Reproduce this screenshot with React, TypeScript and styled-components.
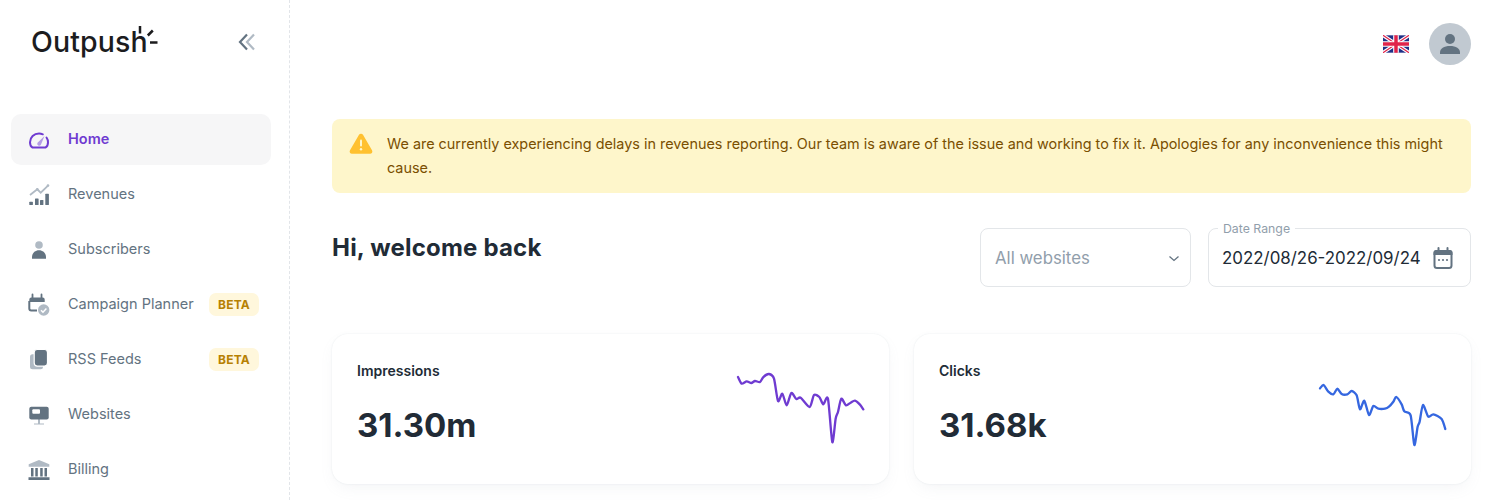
import React from 'react';
import styled, { createGlobalStyle } from 'styled-components';

const GlobalStyle = createGlobalStyle`
  html, body {
    margin: 0;
    padding: 0;
    height: 500px;
    overflow: hidden;
    background: #ffffff;
    font-family: 'Inter', 'Open Sans', sans-serif;
  }
`;

const Page = styled.div`
  display: flex;
  width: 1500px;
  height: 500px;
  overflow: hidden;
`;

const Sidebar = styled.aside`
  flex: 0 0 290px;
  box-sizing: border-box;
  border-right: 1px dashed #e2e5e9;
  padding-left: 11px;
`;

const SidebarHead = styled.div`
  display: flex;
  align-items: center;
  justify-content: space-between;
  height: 84px;
  margin-bottom: 30px;
  padding: 0 33px 0 20px;
`;

const Logo = styled.div`
  display: flex;
  align-items: flex-start;
  height: 40px;
`;

const LogoText = styled.span`
  font-family: 'Inter', sans-serif;
  font-size: 28.500px;
  line-height: 36px;
  font-weight: 500;
  letter-spacing: 0.100px;
  margin-top: 2px;
  color: #1c1c1e;
`;

const LogoSpark = styled.svg`
  margin: 4px 0 0 -10px;
`;

const Nav = styled.nav`
  display: flex;
  flex-direction: column;
  gap: 4px;
  width: 260px;
`;

const NavItem = styled.a<{ $active?: boolean }>`
  display: flex;
  align-items: center;
  height: 51px;
  padding: 0 12px 0 16px;
  border-radius: 10px;
  font-size: 14.500px;
  white-space: nowrap;
  font-weight: ${p => (p.$active ? 600 : 400)};
  color: ${p => (p.$active ? '#6f3bd1' : '#637381')};
  background: ${p => (p.$active ? '#f6f6f7' : 'transparent')};
  svg {
    flex: 0 0 24px;
    margin-right: 17px;
  }
`;

const NavLabel = styled.span`
  margin-bottom: 2px;
`;

const Badge = styled.span`
  margin-left: auto;
  display: flex;
  align-items: center;
  justify-content: center;
  width: 50px;
  height: 23px;
  border-radius: 7px;
  background: #fff7dc;
  color: #b78103;
  font-size: 12px;
  font-weight: 700;
  letter-spacing: 0.200px;
`;

const Main = styled.main`
  flex: 1;
  box-sizing: border-box;
  padding: 23px 29px 0 42px;
`;

const TopBar = styled.header`
  display: flex;
  justify-content: flex-end;
  align-items: center;
  gap: 20px;
`;

const Avatar = styled.div`
  display: flex;
  align-items: center;
  justify-content: center;
  width: 42px;
  height: 42px;
  border-radius: 50%;
  background: #c1c9d1;
`;

const Alert = styled.div`
  display: flex;
  gap: 14px;
  margin-top: 54px;
  padding: 13px 16px 13px 17px;
  border-radius: 8px;
  background: #fef6cb;
  color: #7a4f01;
  font-size: 14.400px;
  line-height: 24px;
  svg {
    flex: 0 0 24px;
  }
`;

const WelcomeRow = styled.section`
  display: flex;
  align-items: flex-start;
  margin-top: 35px;
  gap: 17px;
`;

const Heading = styled.h1`
  flex: 1;
  margin: 2px 0 0;
  font-size: 24px;
  line-height: 36px;
  font-weight: 700;
  letter-spacing: 0.200px;
  color: #212b36;
`;

const Field = styled.div<{ $width: number }>`
  position: relative;
  display: flex;
  align-items: center;
  justify-content: space-between;
  box-sizing: border-box;
  width: ${p => p.$width}px;
  height: 59px;
  border: 1px solid #e3e6e9;
  border-radius: 8px;
`;

const SelectField = styled(Field)`
  padding: 0 9px 0 14px;
  color: #919eab;
  font-size: 16.800px;
`;

const DateField = styled(Field)`
  padding: 0 15px 0 13px;
  color: #212b36;
  font-size: 16.900px;
`;

const FieldLabel = styled.label`
  position: absolute;
  top: -8px;
  left: 9px;
  padding: 0 5px;
  background: #ffffff;
  color: #919eab;
  font-size: 12.300px;
  line-height: 16px;
`;

const Cards = styled.section`
  display: grid;
  grid-template-columns: 1fr 1fr;
  gap: 25px;
  margin-top: 47px;
`;

const Card = styled.article`
  display: flex;
  justify-content: space-between;
  align-items: flex-start;
  box-sizing: border-box;
  height: 150px;
  padding: 0 26px 0 25px;
  border-radius: 16px;
  background: #ffffff;
  box-shadow: 0 0 2px rgba(145, 158, 171, 0.2), 0 6px 16px -4px rgba(145, 158, 171, 0.12);
`;

const CardLabel = styled.div`
  margin-top: 27px;
  font-size: 14px;
  line-height: 20px;
  font-weight: 600;
  color: #212b36;
`;

const CardValue = styled.div`
  margin-top: 20px;
  font-size: 33px;
  line-height: 48px;
  font-weight: 700;
  color: #212b36;
`;

const Spark = styled.svg<{ $top: number }>`
  margin-top: ${p => p.$top}px;
  overflow: visible;
`;

const GREY = '#637381';
const LIGHT = '#b0bac4';

const HomeIcon = () => (
  <svg width="24" height="24" viewBox="0 0 24 24" fill="none">
    <path d="M5.500 19.500C3.500 18.600 3 16.300 3 14.300 3 9.300 7 5.500 12 5.500c1.400 0 2.700.3 3.800.8M19.500 9.500c1 1.400 1.500 3 1.500 4.800 0 2-.5 4.300-2.500 5.200H5.500" stroke="#6f3bd1" strokeWidth="2" strokeLinecap="round" />
    <path d="M10.500 14.800 17.500 8l-3.600 8.700a1.900 1.900 0 1 1-3.400-1.900Z" fill="#b49be6" />
  </svg>
);

const RevenueIcon = () => (
  <svg width="24" height="24" viewBox="0 0 24 24" fill="none">
    <path d="M3 12l7.300-5.700 3.400 3.400 7.600-7.400" stroke={LIGHT} strokeWidth="1.800" />
    <circle cx="10.300" cy="6.300" r="1.300" fill={LIGHT} />
    <circle cx="21" cy="2.500" r="1.300" fill={LIGHT} />
    <rect x="2.300" y="18.700" width="3.600" height="3.300" rx="0.600" fill={GREY} />
    <rect x="8" y="15.500" width="3.600" height="6.500" rx="0.600" fill={GREY} />
    <rect x="13" y="17" width="3.400" height="5" rx="0.600" fill={GREY} />
    <rect x="18.300" y="10.700" width="3.600" height="11.300" rx="0.600" fill={GREY} />
  </svg>
);

const SubscribersIcon = () => (
  <svg width="24" height="24" viewBox="0 0 24 24">
    <circle cx="12" cy="7" r="3.800" fill={LIGHT} />
    <path d="M5 20.700v-1.500c0-4 3-6.900 7-6.900s7 2.900 7 6.900v1.500H5Z" fill={GREY} />
  </svg>
);

const PlannerIcon = () => (
  <svg width="24" height="24" viewBox="0 0 24 24" fill="none">
    <path d="M2.300 6.500a2 2 0 0 1 2-2h11.400a2 2 0 0 1 2 2V9H2.300V6.500Z" fill={GREY} />
    <path d="M5.500 1.500v4M14.500 1.500v4" stroke={GREY} strokeWidth="1.800" strokeLinecap="round" />
    <path d="M2.300 8v7.500a2 2 0 0 0 2 2H10" stroke={GREY} strokeWidth="2" />
    <circle cx="16.700" cy="17" r="6.500" fill="#ffffff" />
    <circle cx="16.700" cy="17" r="5.700" fill={LIGHT} />
    <path d="M14 17.200l2 2 3.400-3.600" stroke="#ffffff" strokeWidth="1.500" />
  </svg>
);

const FeedsIcon = () => (
  <svg width="24" height="24" viewBox="0 0 24 24">
    <rect x="3" y="6.300" width="13" height="15" rx="2.500" fill={LIGHT} />
    <rect x="7.200" y="1.500" width="13.300" height="16.600" rx="3" fill={GREY} stroke="#ffffff" strokeWidth="1.200" />
  </svg>
);

const WebsitesIcon = () => (
  <svg width="24" height="24" viewBox="0 0 24 24">
    <path d="M11 16h2v4.500h4v1H7v-1h4V16Z" fill={LIGHT} />
    <rect x="2.300" y="3.700" width="19.400" height="12.800" rx="2" fill={GREY} />
    <rect x="5.300" y="6.300" width="7.700" height="4.400" rx="1" fill="#ffffff" />
  </svg>
);

const BillingIcon = () => (
  <svg width="24" height="24" viewBox="0 0 24 24">
    <path d="M12 2l10.300 4.300v2.400H1.700V6.300L12 2Z" fill={LIGHT} />
    <path d="M4 10h2.500v8.500H4zM8.300 10h2.500v8.500H8.300zM13.200 10h2.500v8.500h-2.500zM17.500 10H20v8.500h-2.500zM1.500 19.300h21V22h-21z" fill={GREY} />
  </svg>
);

const navItems = [
  { label: 'Home', icon: <HomeIcon />, active: true },
  { label: 'Revenues', icon: <RevenueIcon /> },
  { label: 'Subscribers', icon: <SubscribersIcon /> },
  { label: 'Campaign Planner', icon: <PlannerIcon />, beta: true },
  { label: 'RSS Feeds', icon: <FeedsIcon />, beta: true },
  { label: 'Websites', icon: <WebsitesIcon /> },
  { label: 'Billing', icon: <BillingIcon /> },
];

const purpleLine = [
  [52, 50], [63, 70], [78, 63], [92, 68], [103, 62], [118, 65], [128, 50], [145, 41], [160, 55], [172, 122],
  [185, 100], [198, 135], [212, 98], [227, 116], [240, 112], [267, 140], [280, 104], [296, 110], [308, 132], [322, 115],
  [335, 245], [345, 175], [352, 155], [362, 115], [376, 135], [390, 127], [403, 121], [418, 133], [428, 147],
];
const blueLine = [
  [45, 55], [56, 45], [70, 65], [85, 73], [97, 56], [110, 72], [127, 73], [140, 63], [155, 76], [165, 118],
  [178, 92], [192, 135], [205, 108], [220, 116], [240, 116], [252, 110], [265, 95], [274, 81], [290, 103], [298, 124],
  [317, 136], [328, 225], [338, 170], [344, 155], [354, 105], [370, 140], [385, 133], [410, 147], [421, 177],
];

// smooth curve through the chart points
const smoothPath = (pts: number[][]) => {
  let d = `M${pts[0][0]} ${pts[0][1]}`;
  for (let i = 0; i < pts.length - 1; i++) {
    const p0 = pts[Math.max(i - 1, 0)];
    const p1 = pts[i];
    const p2 = pts[i + 1];
    const p3 = pts[Math.min(i + 2, pts.length - 1)];
    const c1x = p1[0] + (p2[0] - p0[0]) / 8;
    const c1y = p1[1] + (p2[1] - p0[1]) / 8;
    const c2x = p2[0] - (p3[0] - p1[0]) / 8;
    const c2y = p2[1] - (p3[1] - p1[1]) / 8;
    d += ` C${c1x} ${c1y} ${c2x} ${c2y} ${p2[0]} ${p2[1]}`;
  }
  return d;
};

const App: React.FC = () => {
  return (
    <Page>
      <GlobalStyle />
      <Sidebar>
        <SidebarHead>
          <Logo>
            <LogoText>Outpush</LogoText>
            <LogoSpark width="20" height="22" viewBox="0 0 20 22" fill="none" stroke="#1c1c1e" strokeWidth="2.500">
              <path d="M2 0v7.500M9.800 9.500l5-5M12 16.500h7.500" />
            </LogoSpark>
          </Logo>
          <svg width="18" height="18" viewBox="0 0 18 18" fill="none" strokeWidth="2.200">
            <path d="M9 1.500 2 9l7 7.500" stroke={GREY} />
            <path d="M16 1.500 9 9l7 7.500" stroke={LIGHT} />
          </svg>
        </SidebarHead>
        <Nav>
          {navItems.map(item => (
            <NavItem key={item.label} $active={item.active}>
              {item.icon}
              <NavLabel>{item.label}</NavLabel>
              {item.beta && <Badge>BETA</Badge>}
            </NavItem>
          ))}
        </Nav>
      </Sidebar>
      <Main>
        <TopBar>
          <svg width="26" height="18" viewBox="0 0 60 40">
            <rect width="60" height="40" fill="#1f2f86" />
            <path d="M0 0 60 40M60 0 0 40" stroke="#ffffff" strokeWidth="8" />
            <path d="M0 0 60 40M60 0 0 40" stroke="#e0234a" strokeWidth="3" />
            <path d="M30 0v40M0 20h60" stroke="#ffffff" strokeWidth="13" />
            <path d="M30 0v40M0 20h60" stroke="#e0234a" strokeWidth="8" />
          </svg>
          <Avatar>
            <svg width="26" height="26" viewBox="0 0 26 26" fill={GREY}>
              <circle cx="13" cy="8" r="5" />
              <path d="M3 23v-1.500C3 17.500 7 15 13 15s10 2.500 10 6.500V23H3Z" />
            </svg>
          </Avatar>
        </TopBar>
        <Alert>
          <svg width="24" height="24" viewBox="0 0 24 24">
            <path d="M10 2.800a2.300 2.300 0 0 1 4 0l9 15.500a2.300 2.300 0 0 1-2 3.500H3a2.300 2.300 0 0 1-2-3.500l9-15.500Z" fill="#ffc130" />
            <rect x="11" y="7.500" width="2" height="7" rx="1" fill="#fef6cb" />
            <circle cx="12" cy="17.300" r="1.200" fill="#fef6cb" />
          </svg>
          <span>
            We are currently experiencing delays in revenues reporting. Our team is aware of the issue and working to fix it. Apologies for any inconvenience this might cause.
          </span>
        </Alert>
        <WelcomeRow>
          <Heading>Hi, welcome back</Heading>
          <SelectField $width={211}>
            All websites
            <svg width="14" height="14" viewBox="0 0 14 14" fill="none" stroke={GREY} strokeWidth="1.300">
              <path d="M2.500 5.500 7 9.500l4.500-4" />
            </svg>
          </SelectField>
          <DateField $width={263}>
            <FieldLabel>Date Range</FieldLabel>
            2022/08/26-2022/09/24
            <svg width="24" height="24" viewBox="0 0 24 24" fill="none">
              <path d="M5 4h14a2.500 2.500 0 0 1 2.500 2.500V9h-19V6.500A2.500 2.500 0 0 1 5 4Z" fill={GREY} />
              <path d="M7.500 2v4M16.500 2v4" stroke={GREY} strokeWidth="2" strokeLinecap="round" />
              <rect x="3.500" y="5" width="17" height="17" rx="2.500" stroke={GREY} strokeWidth="2" />
              <circle cx="8" cy="14" r="1.100" fill={GREY} />
              <circle cx="12" cy="14" r="1.100" fill={GREY} />
              <circle cx="16" cy="14" r="1.100" fill={GREY} />
            </svg>
          </DateField>
        </WelcomeRow>
        <Cards>
          <Card>
            <div>
              <CardLabel>Impressions</CardLabel>
              <CardValue>31.30m</CardValue>
            </div>
            <Spark $top={40} width="125.300" height="68" viewBox="52 41 376 204" fill="none">
              <path d={smoothPath(purpleLine)} stroke="#6f3bd1" strokeWidth="7" strokeLinejoin="round" strokeLinecap="round" />
            </Spark>
          </Card>
          <Card>
            <div>
              <CardLabel>Clicks</CardLabel>
              <CardValue>31.68k</CardValue>
            </div>
            <Spark $top={51} width="125.300" height="60" viewBox="45 45 376 180" fill="none">
              <path d={smoothPath(blueLine)} stroke="#3567e0" strokeWidth="7" strokeLinejoin="round" strokeLinecap="round" />
            </Spark>
          </Card>
        </Cards>
      </Main>
    </Page>
  );
};

export default App;
